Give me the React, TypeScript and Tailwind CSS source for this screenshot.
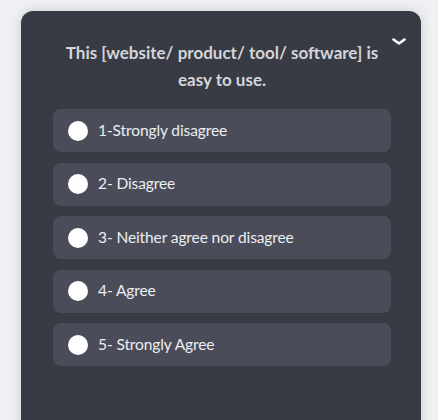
const options = [
  '1-Strongly disagree',
  '2- Disagree',
  '3- Neither agree nor disagree',
  '4- Agree',
  '5- Strongly Agree',
];

export default function App() {
  return (
    <div className="w-[438px] h-[420px] overflow-hidden bg-[#eef0f4] pt-[11px] pl-[21px] font-['Lato','Open_Sans',sans-serif]">
      <div className="relative w-[400px] h-[440px] rounded-xl bg-[#383b44] shadow-[0_0_12px_rgba(0,0,0,0.15)] pl-8 pr-[30px] pt-[28px]">
        <button className="absolute right-[15px] top-[27px] text-white">
          <svg width="14" height="8" viewBox="0 0 14 8" fill="none">
            <path d="M1.5 1.5 L7 5.5 L12.5 1.5" stroke="currentColor" strokeWidth="2.6" strokeLinecap="round" strokeLinejoin="round" />
          </svg>
        </button>
        <h2 className="mx-auto w-[330px] text-center text-[17px] leading-[27px] font-bold text-[#d3d5da]">
          This [website/ product/ tool/ software] is easy to use.
        </h2>
        <div className="mt-[16px] flex flex-col gap-[10.5px]">
          {options.map((label) => (
            <label
              key={label}
              className="flex items-center gap-[10px] h-[43px] rounded-lg bg-[#4a4d59] px-[15px] cursor-pointer"
            >
              <span className="w-[20px] h-[20px] rounded-full bg-white shrink-0" />
              <span className="text-[15.5px] text-[#eceef2] tracking-[-0.1px]">{label}</span>
            </label>
          ))}
        </div>
      </div>
    </div>
  );
}
